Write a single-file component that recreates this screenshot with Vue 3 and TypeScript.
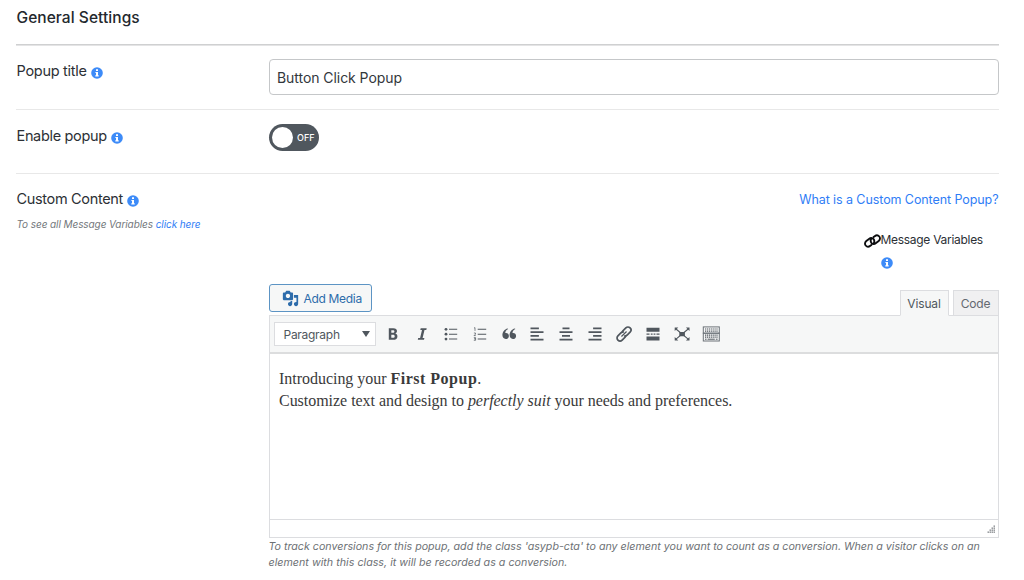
<script setup lang="ts">
import { ref } from 'vue'

const title = ref('Button Click Popup')
const enabled = ref(false)
const tab = ref<'Visual' | 'Code'>('Visual')
const tabs = ['Visual', 'Code'] as const
const gripDots = [
  [6.5, 0.5], [4.5, 2.5], [6.5, 2.5], [2.5, 4.5], [4.5, 4.5], [6.5, 4.5],
  [0.5, 6.5], [2.5, 6.5], [4.5, 6.5], [6.5, 6.5],
]
</script>

<template>
  <main class="settings">
    <h1 class="heading">General Settings</h1>

    <section class="row row-title">
      <div class="label"><span>Popup title</span>
        <svg class="info" viewBox="0 0 12 12"><circle cx="6" cy="6" r="5.8" /><path d="M5 2.3h2v1.6H5zM4.4 4.9H7v3.3h.7v1.2H4.3V8.2H5V6h-.6z" /></svg>
      </div>
      <input v-model="title" class="title-input" type="text" />
    </section>

    <section class="row row-enable">
      <div class="label"><span>Enable popup</span>
        <svg class="info" viewBox="0 0 12 12"><circle cx="6" cy="6" r="5.8" /><path d="M5 2.3h2v1.6H5zM4.4 4.9H7v3.3h.7v1.2H4.3V8.2H5V6h-.6z" /></svg>
      </div>
      <button class="toggle" type="button" @click="enabled = !enabled"><i class="knob"></i><span>{{ enabled ? 'ON' : 'OFF' }}</span></button>
    </section>

    <section class="row row-content">
      <div class="side">
        <div class="label"><span>Custom Content</span>
          <svg class="info" viewBox="0 0 12 12"><circle cx="6" cy="6" r="5.8" /><path d="M5 2.3h2v1.6H5zM4.4 4.9H7v3.3h.7v1.2H4.3V8.2H5V6h-.6z" /></svg>
        </div>
        <p class="hint">To see all Message Variables <a>click here</a></p>
      </div>

      <div class="body">
        <a class="what">What is a Custom Content Popup?</a>
        <div class="vars">
          <svg class="chain" viewBox="0 0 17 14" fill="none" stroke="#0c0d0f" stroke-width="1.9" stroke-linecap="round">
            <path d="M7.4 10.9 6.3 11.8C4.8 13 2.8 12.8 1.7 11.5S.9 8.2 2.3 7.1L5 4.9C6.5 3.7 8.5 3.9 9.6 5.2c.8 1 .9 2.3.4 3.4" />
            <path d="M9.6 3.1 10.7 2.2c1.5-1.2 3.5-1 4.6.3s.8 3.3-.6 4.4L12 9.1c-1.5 1.2-3.5 1-4.6-.3-.8-1-.9-2.3-.4-3.4" />
          </svg>
          <div class="vars-text">
            <span>Message Variables</span>
            <svg class="info" viewBox="0 0 12 12"><circle cx="6" cy="6" r="5.8" /><path d="M5 2.3h2v1.6H5zM4.4 4.9H7v3.3h.7v1.2H4.3V8.2H5V6h-.6z" /></svg>
          </div>
        </div>

        <div class="editor-top">
          <button class="media" type="button">
            <svg viewBox="0 0 20 20" fill="#2d6cab"><path d="M13 11V4c0-.55-.45-1-1-1h-1.67L9 1H5L3.67 3H2c-.55 0-1 .45-1 1v7c0 .55.45 1 1 1h10c.55 0 1-.45 1-1zM7 4.5c1.38 0 2.5 1.12 2.5 2.5S8.38 9.5 7 9.5 4.5 8.38 4.5 7 5.62 4.5 7 4.5zM14 6h5v10.5c0 1.38-1.12 2.5-2.5 2.5S14 17.88 14 16.5s1.12-2.5 2.5-2.5c.17 0 .34.02.5.05V9h-3V6zm-4 8.05V13h2v3.5c0 1.38-1.12 2.5-2.5 2.5S7 17.88 7 16.5 8.12 14 9.5 14c.17 0 .34.02.5.05z" /></svg>
            <span>Add Media</span>
          </button>
          <div class="tabs">
            <button v-for="t in tabs" :key="t" type="button" class="tab" :class="{ active: tab === t }" @click="tab = t">{{ t }}</button>
          </div>
        </div>

        <div class="editor">
          <div class="toolbar">
            <div class="select"><span>Paragraph</span><svg viewBox="0 0 8 6"><path d="M0 0h8L4 6z" /></svg></div>
            <div class="tools">
              <svg viewBox="0 0 18 18"><path fill-rule="evenodd" d="M4.8 3.2h4.5c2.4 0 3.7 1.1 3.7 2.9 0 1.2-.6 2-1.7 2.5 1.5.4 2.1 1.4 2.1 2.8 0 2.2-1.5 3.4-4.2 3.4H4.8zm2.5 2.1v2.5h1.6c1 0 1.5-.4 1.5-1.3 0-.8-.5-1.2-1.5-1.2zm0 4.4v3h1.8c1.1 0 1.6-.5 1.6-1.5s-.6-1.5-1.7-1.5z" /></svg>
              <svg viewBox="0 0 18 18"><path d="M7.7 3.2h6l-.4 1.7h-1.8L9.6 13.1h1.8l-.4 1.7H4.8l.4-1.7h1.9L9 4.9H7.3z" /></svg>
              <svg viewBox="0 0 18 18"><circle cx="4" cy="4.3" r="1.4" /><circle cx="4" cy="9.2" r="1.4" /><circle cx="4" cy="14.1" r="1.4" /><path d="M7 3.8h8.2v1H7zM7 8.7h8.2v1H7zM7 13.6h8.2v1H7z" /></svg>
              <svg viewBox="0 0 18 18"><path d="M6.7 3.8h8.5v1H6.7zM6.7 8.7h8.5v1H6.7zM6.7 13.6h8.5v1H6.7z" /><path class="fine" d="M3 3.1l1-.5v3.3M2.9 8h1.6v1.1l-1.5 1.5h1.8M2.8 12.6h1.8v1.2H3.3h1.3v1.5H2.8" /></svg>
              <svg viewBox="0 0 18 18"><path d="M8.2 4.1C6.2 4.9 5.3 6.4 5.3 8c2-.4 3.6.9 3.6 2.9 0 1.9-1.4 3.1-3.2 3.1-2.1 0-3.3-1.6-3.3-3.9 0-3.2 2.1-6 5.2-6.7zM15.4 4.1c-2 .8-2.9 2.3-2.9 3.9 2-.4 3.6.9 3.6 2.9 0 1.9-1.4 3.1-3.2 3.1-2.1 0-3.3-1.6-3.3-3.9 0-3.2 2.1-6 5.2-6.7z" /></svg>
              <svg viewBox="0 0 18 18"><path d="M2.5 2.6h8.4v1.7H2.5zM2.5 6.3h13v1.7h-13zM2.5 10h8.4v1.7H2.5zM2.5 13.7h13v1.7h-13z" /></svg>
              <svg viewBox="0 0 18 18"><path d="M5.5 2.6h7v1.7h-7zM2.5 6.3h13v1.7h-13zM5 10h8v1.7H5zM2.5 13.7h13v1.7h-13z" /></svg>
              <svg viewBox="0 0 18 18"><path d="M7.1 2.6h8.4v1.7H7.1zM2.5 6.3h13v1.7h-13zM7.1 10h8.4v1.7H7.1zM2.5 13.7h13v1.7h-13z" /></svg>
              <svg viewBox="0 0 18 18"><g class="line" transform="rotate(-45 9 9)"><path d="M10.2 7.6A2.9 2.9 0 0 0 7.6 6H3.4a3 3 0 0 0 0 6h4.2a2.9 2.9 0 0 0 2.2-1" /><path d="M7.8 10.4a2.9 2.9 0 0 0 2.6 1.6h4.2a3 3 0 0 0 0-6h-4.2a2.9 2.9 0 0 0-2.2 1" /><path d="M5.4 9h7.2" stroke-width="1.2" /></g></svg>
              <svg viewBox="0 0 18 18"><path d="M2.5 2.7h13v4h-13zM2.5 8.4h3v1.4h-3zM6.8 8.4h1.8v1.4H6.8zM9.6 8.4h1.8v1.4H9.6zM12.5 8.4h3v1.4h-3zM2.5 11.4h13v4h-13z" /></svg>
              <svg viewBox="0 0 18 18"><path d="M6.3 6.9h5.6v4.4H6.3zM1.7 2.6h3.6L1.7 6.1zM16.5 2.6h-3.6l3.6 3.5zM1.7 15.6h3.6l-3.6-3.5zM16.5 15.6h-3.6l3.6-3.5z" /><path class="cross" d="M3 4l12.2 10.2M15.2 4 3 14.2" /></svg>
              <svg viewBox="0 0 18 18"><rect class="key" x="1.3" y="1.9" width="16" height="6.3" /><rect class="key" x="1.3" y="8.2" width="16" height="7.8" /><path class="dash" d="M3 4h13M3 6.1h13M3 10.2h13M3 12.2h13" /><path class="plain" d="M3 14.2h1.6M5.6 14.2h7.2M13.8 14.2h1.8" /></svg>
            </div>
          </div>
          <div class="canvas">
            <p>Introducing your <b>First Popup</b>.</p>
            <p>Customize text and design to <em>perfectly suit</em> your needs and preferences.</p>
          </div>
          <div class="status">
            <svg viewBox="0 0 9 9"><rect v-for="(d, i) in gripDots" :key="i" :x="d[0]" :y="d[1]" width="1.5" height="1.3" /></svg>
          </div>
        </div>
        <p class="note">To track conversions for this popup, add the class 'asypb-cta' to any element you want to count as a conversion. When a visitor clicks on an<br /><span class="note-end">element with this class, it will be recorded as a conversion.</span></p>
      </div>
    </section>
  </main>
</template>

<style>
html, body { background: #fff; }
</style>

<style scoped>
* { box-sizing: border-box; }
.settings { width: 1024px; height: 580px; padding: 0 25.5px 0 16px; overflow: hidden; font-family: Inter, "Liberation Sans", sans-serif; color: #2c3035; background: #fff; }
button { font-family: inherit; padding: 0; margin: 0; }
p { margin: 0; }
a { color: #2f7df6; }
.heading { height: 46px; margin: 0; padding: 8px 0 0 .5px; font-size: 15.5px; line-height: 20px; font-weight: 500; letter-spacing: .06px; color: #23282d; border-bottom: 1px solid #e4e4e5; box-shadow: inset 0 -1px #cfd0d1; }
.row { display: grid; grid-template-columns: 252.5px 1fr; border-bottom: 1px solid #e8e8e8; }
.label { display: flex; gap: 4px; padding-left: .5px; font-size: 14.5px; line-height: 20px; height: 20px; letter-spacing: -.33px; white-space: nowrap; }
.info { width: 12px; height: 12px; margin-top: 6px; flex: none; }
.info circle { fill: #3d8bf8; }
.info path { fill: #fff; }
.row-title { height: 64px; padding-top: 13px; }
.row-title .label { margin-top: 2px; letter-spacing: -.28px; }
.title-input { width: 100%; height: 36px; border: 1px solid #c5c7c9; border-radius: 4px; padding: 0 7.5px; font-family: inherit; font-size: 14px; letter-spacing: -.06px; color: #32373c; background: #fff; outline: none; }
.row-enable { height: 64px; padding-top: 14px; }
.row-enable .label { margin-top: 2px; }
.toggle { width: 50px; height: 27px; border: 0; border-radius: 14px; background: #50575e; display: flex; align-items: center; gap: 4px; padding-left: 3.5px; color: #fff; font-size: 9px; font-weight: 500; }
.knob { width: 21px; height: 21px; border-radius: 50%; background: #fff; flex: none; }
.row-content { border: 0; padding-top: 15px; }
.hint { margin-top: 7px; padding-left: .5px; font-size: 10px; letter-spacing: -.08px; line-height: 16px; font-style: italic; color: #73777b; white-space: nowrap; }
.body { display: flex; flex-direction: column; padding-top: 1px; }
.what { align-self: flex-end; font-size: 12.5px; line-height: 20px; letter-spacing: -.08px; white-space: nowrap; }
.vars { display: flex; align-self: flex-end; width: 135px; margin-top: 20px; }
.chain { width: 17px; height: 14px; margin-top: 4px; flex: none; }
.vars-text { font-size: 12px; line-height: 20px; letter-spacing: -.29px; display: flex; flex-direction: column; white-space: nowrap; }
.vars-text .info { margin-top: 7px; }
.editor-top { display: flex; justify-content: space-between; align-items: flex-end; height: 47px; position: relative; z-index: 1; margin-bottom: -1px; }
.media { width: 103px; height: 28px; margin-bottom: 4px; border: 1px solid #5c94c4; border-radius: 3px; background: #f6f7f7; color: #2d6cab; font-size: 12px; letter-spacing: -.32px; display: flex; align-items: center; gap: 5px; padding-left: 12px; white-space: nowrap; }
.media svg { width: 17px; height: 17px; flex: none; }
.tabs { display: flex; gap: 4px; }
.tab { width: 46px; height: 26px; border: 1px solid #dcdde0; background: #f0f0f1; color: #646970; font-size: 12px; letter-spacing: -.15px; }
.tab.active { width: 49px; border-bottom-color: #f6f7f7; background: #f6f7f7; color: #50575e; }
.editor { height: 223px; border: 1px solid #dcdde0; display: flex; flex-direction: column; }
.toolbar { height: 38px; border-bottom: 2px solid #dcddde; background: #f6f7f7; display: flex; align-items: center; padding-left: 4.5px; flex: none; }
.select { width: 102px; height: 24px; border: 1px solid #dcdde0; background: #fff; color: #50575e; font-size: 12px; letter-spacing: -.28px; display: flex; align-items: center; justify-content: space-between; padding: 0 5px 0 8.5px; }
.select svg { width: 8px; height: 6px; fill: #50575e; }
.tools { display: flex; gap: 10.9px; margin-left: 8px; }
.tools svg { width: 18px; height: 18px; fill: #50575e; }
.tools .fine { fill: none; stroke: #50575e; stroke-width: .7; }
.tools .line { fill: none; stroke: #50575e; stroke-width: 1.7; }
.tools .cross { fill: none; stroke: #50575e; stroke-width: 1.1; }
.tools .key { fill: none; stroke: #6c7278; stroke-width: 1; }
.tools .dash { fill: none; stroke: #50575e; stroke-width: 1.2; stroke-dasharray: 1.2 .7; }
.tools .plain { stroke: #50575e; stroke-width: 1; }
.canvas { flex: 1; padding: 14px 9.5px; font-family: "Liberation Serif", serif; font-size: 16px; letter-spacing: -.03px; line-height: 21.5px; color: #3a3a3a; white-space: nowrap; }
.canvas b { letter-spacing: .5px; }
.status { height: 18px; border-top: 1px solid #dcdde0; display: flex; justify-content: flex-end; align-items: flex-end; padding: 0 2px 3px; }
.status svg { width: 9px; height: 9px; fill: #84888c; }
.note { font-size: 10.68px; line-height: 16px; font-style: italic; color: #6c7074; white-space: nowrap; margin-top: 1px; }
.note-end { letter-spacing: .03px; }
</style>
